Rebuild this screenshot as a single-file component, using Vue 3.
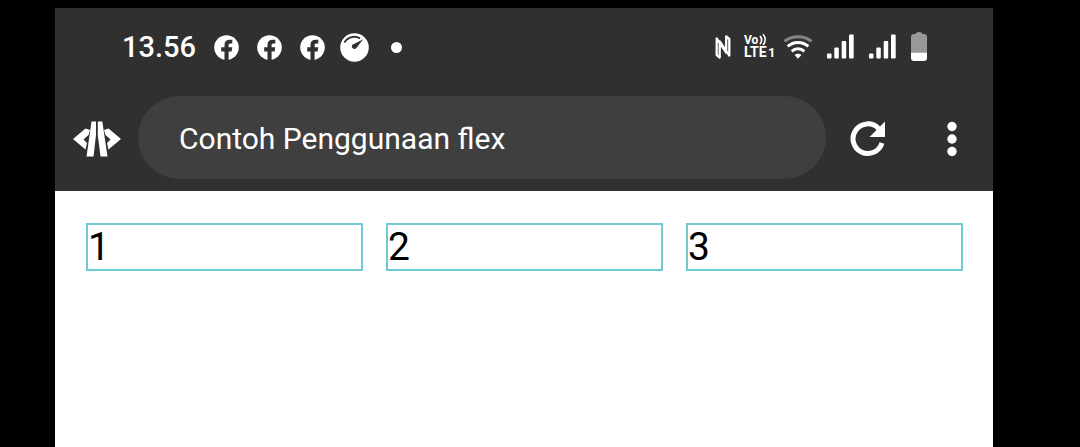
<script setup>
import { ref } from 'vue'

const address = ref('Contoh Penggunaan flex')
const boxes = [1, 2, 3]
</script>

<template>
  <div class="stage">
    <div class="phone">
      <header class="status">
        <div class="left">
          <time class="clock">13.56</time>
          <svg v-for="n in 3" :key="n" class="fb" viewBox="0 0 25 25" aria-hidden="true">
            <circle cx="12.5" cy="12.5" r="12.3" fill="#fff" />
            <path d="M10.5 25V16.5H7.2V12.3H10.5V9.8C10.5 6.4 12.5 4.8 15.7 4.8H18.3V8.6H16.5C15 8.6 14.6 9.3 14.6 10.4V12.3H18.3L17.6 16.5H14.6V25Z" fill="#303030" />
          </svg>
          <svg class="gauge" viewBox="0 0 29 29" aria-hidden="true">
            <circle cx="14.5" cy="14.5" r="14.3" fill="#fff" />
            <path d="M4.4 9.5C8 3.6 15 2.5 20 5.4" fill="none" stroke="#303030" stroke-width="2" />
            <path d="M23.2 6.3L12.5 11.8C10.5 13.5 13 17.2 16 15.5Z" fill="#303030" />
          </svg>
          <span class="dot"></span>
        </div>
        <div class="right">
          <svg class="nfc" viewBox="0 0 16 24" aria-hidden="true">
            <path d="M4.7 22.5L1.7 20V3.5L11.2 17.5V1.5L14.3 4V20.5L4.7 6.5Z" fill="none" stroke="#fff" stroke-width="2.3" stroke-linejoin="round" />
          </svg>
          <svg class="lte" viewBox="0 0 34 30" role="img" aria-label="VoLTE 1">
            <g fill="#fff" font-family="Roboto, sans-serif" font-weight="700">
              <text x="1" y="12" font-size="12">Vo</text>
              <text x="1" y="25" font-size="14">LTE</text>
              <text x="25" y="25" font-size="13">1</text>
            </g>
            <path d="M17 4C19 6.3 19 9.5 17 12.3M20 2.3C22.8 5.5 22.8 9.8 20 13" fill="none" stroke="#fff" stroke-width="1.7" />
          </svg>
          <svg class="wifi" viewBox="0 0 30 24" aria-hidden="true">
            <g fill="none" stroke-width="3">
              <path d="M1.5 6.3C9 .2 21 .2 28.5 6.3" stroke="#858585" />
              <path d="M4.7 11.4C10.5 6.2 19.5 6.2 25.3 11.4M8.7 16.3C12.3 13 17.7 13 21.3 16.3" stroke="#fff" />
            </g>
            <path d="M11.6 20C13.4 18.2 16.6 18.2 18.4 20L15 23.7Z" fill="#fff" />
          </svg>
          <svg v-for="n in 2" :key="n" class="signal" viewBox="0 0 28 26" aria-hidden="true">
            <g fill="#fff">
              <rect x="0" y="19.5" width="4.5" height="5" rx="1" />
              <rect x="7.3" y="13.5" width="4.5" height="11" rx="1" />
              <rect x="14.7" y="7" width="4.5" height="17.5" rx="1" />
              <rect x="22" y=".5" width="4.7" height="24" rx="1" />
            </g>
          </svg>
          <svg class="battery" viewBox="0 0 16 30" aria-hidden="true">
            <path d="M0 20.5V5Q0 2 3 2H4.5Q5 0 8 0T11.5 2H13Q16 2 16 5V20.5Z" fill="#989898" />
            <path d="M0 20.5H16V26Q16 29 13 29H3Q0 29 0 26Z" fill="#fff" />
          </svg>
        </div>
      </header>

      <nav class="toolbar">
        <button class="icon code" type="button" aria-label="Editor">
          <svg viewBox="0 0 48 36" aria-hidden="true">
            <path d="M18.5 0.5H23V14L20.5 35.5H13.5ZM24.8 .5H29.3L34.5 35.5H27.5L24.8 14Z" fill="#fff" />
            <path d="M12.5 7.5L17 9L15.5 14L10.5 18.5L14 22L12.5 28.5L0 18ZM35.5 7.5L31 9L32.5 14L37.5 18.5L34 22L35.5 28.5L48 18Z" fill="#fff" />
          </svg>
        </button>
        <input v-model="address" class="address" type="text" aria-label="Address" />
        <button class="icon reload" type="button" aria-label="Reload">
          <svg viewBox="0 0 36 36" aria-hidden="true">
            <path d="M32 22A14.8 14.8 0 1 1 28.5 7.4" fill="none" stroke="#fff" stroke-width="5" />
            <path d="M35 .5V16H19.5Z" fill="#fff" />
          </svg>
        </button>
        <button class="icon more" type="button" aria-label="Menu">
          <svg viewBox="0 0 12 36" aria-hidden="true">
            <g fill="#fff">
              <circle cx="6" cy="5.5" r="4.7" />
              <circle cx="6" cy="18" r="4.7" />
              <circle cx="6" cy="30.5" r="4.7" />
            </g>
          </svg>
        </button>
      </nav>

      <main class="row">
        <div v-for="box in boxes" :key="box" class="box">{{ box }}</div>
      </main>
    </div>
  </div>
</template>

<style>
body {
  background: #000;
}
</style>

<style scoped>
.stage {
  box-sizing: border-box;
  display: flex;
  min-height: 100vh;
  padding: 8px 87px 0 55px;
  background: #000;
  font-family: Roboto, "Liberation Sans", sans-serif;
}

.phone {
  flex: 1;
  min-width: 0;
  background: #fff;
}

svg {
  display: block;
  flex: none;
}

.status {
  display: flex;
  align-items: center;
  justify-content: space-between;
  height: 78px;
  padding: 0 66px 0 67px;
  background: #303030;
}

.left,
.right {
  display: flex;
  align-items: center;
}

.left {
  gap: 18px;
}

.right {
  gap: 14px;
}

.clock {
  color: #fff;
  font-size: 29px;
  font-weight: 500;
  line-height: 34px;
}

.fb {
  width: 25px;
  height: 25px;
}

.gauge {
  width: 29px;
  height: 29px;
  margin-left: -3px;
}

.dot {
  width: 11px;
  height: 11px;
  margin-left: 4px;
  border-radius: 50%;
  background: #fff;
}

.nfc {
  width: 16px;
  height: 24px;
  margin-right: -2px;
}

.lte {
  width: 34px;
  height: 30px;
  margin-right: -8px;
}

.wifi {
  width: 30px;
  height: 24px;
}

.signal {
  width: 28px;
  height: 26px;
}

.battery {
  width: 16px;
  height: 30px;
}

.toolbar {
  display: flex;
  align-items: center;
  height: 105px;
  padding: 0 35px 0 18px;
  background: #303030;
}

.icon {
  flex: none;
  padding: 0;
  border: 0;
  background: none;
}

.icon svg {
  width: 100%;
  height: 36px;
}

.code {
  width: 48px;
}

.reload {
  width: 36px;
}

.more {
  width: 12px;
}

.address {
  box-sizing: border-box;
  flex: 1;
  min-width: 0;
  height: 83px;
  margin: 0 24px 2px 17px;
  padding: 2px 41px 0;
  border: 0;
  border-radius: 42px;
  outline: 0;
  background: #3f3f3f;
  color: #fff;
  font: 400 30px/40px Roboto, "Liberation Sans", sans-serif;
}

.reload {
  margin-right: 60px;
}

.row {
  display: flex;
  gap: 23px;
  padding: 32px 30px 32px 31px;
}

.box {
  flex: 1;
  border: 2px solid #6fcbd3;
  color: #000;
  font-size: 39px;
  line-height: 44px;
}
</style>
